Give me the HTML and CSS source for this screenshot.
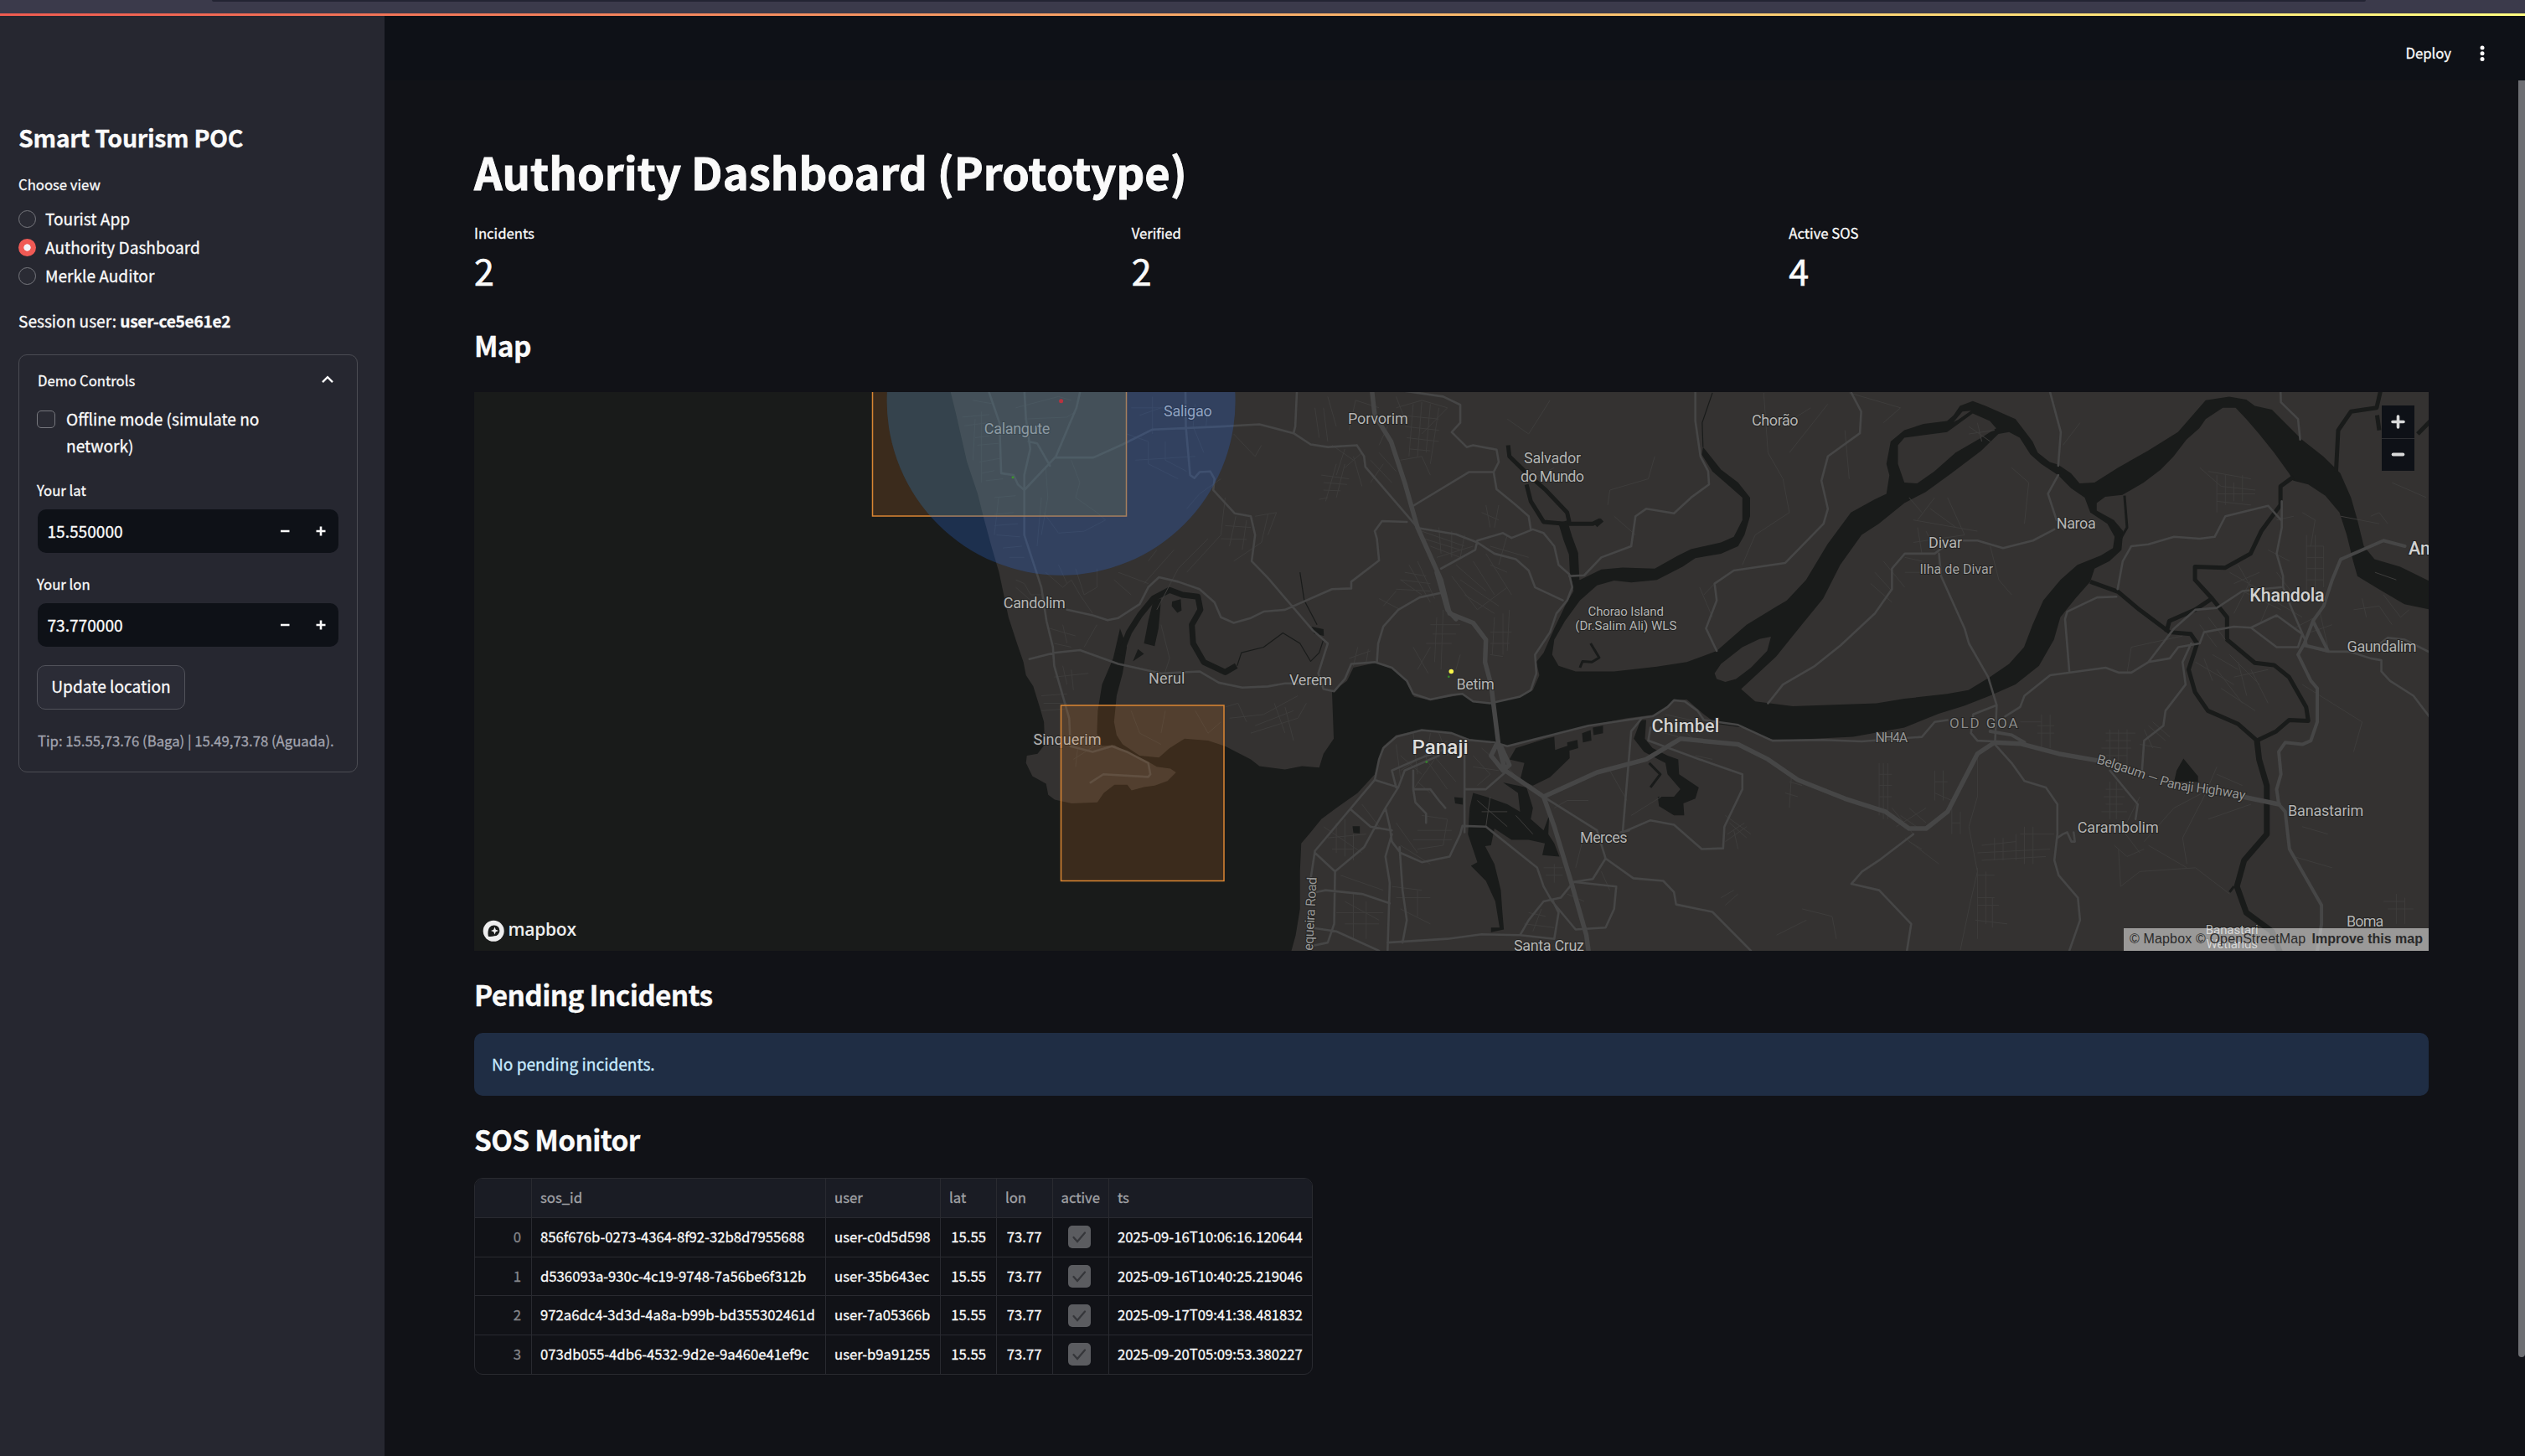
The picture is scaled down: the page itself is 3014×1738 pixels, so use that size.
FILE: index.html
```html
<!DOCTYPE html>
<html lang="en">
<head>
<meta charset="utf-8">
<title>Smart Tourism POC</title>
<link rel="stylesheet" href="styles.css">
</head>
<body>
<div class="browser-edge"><div class="address-bar"></div></div>
<div class="decoration"></div>
<div class="app">
  <aside class="sidebar">
    <h2 class="brand">Smart Tourism POC</h2>
    <div class="label choose">Choose view</div>
    <div class="radio"><span class="dot"></span><span>Tourist App</span></div>
    <div class="radio"><span class="dot dot-on"></span><span>Authority Dashboard</span></div>
    <div class="radio"><span class="dot"></span><span>Merkle Auditor</span></div>
    <p class="session">Session user: <b>user-ce5e61e2</b></p>
    <section class="expander">
      <div class="expander-head"><span class="label">Demo Controls</span>
        <svg class="chevron" width="16" height="10" viewBox="0 0 16 10"><path d="M2 8.2 8 2.2l6 6" fill="none" stroke="#fafafa" stroke-width="2.4"/></svg>
      </div>
      <div class="check"><span class="box"></span><span class="check-text">Offline mode (simulate no<br>network)</span></div>
      <div class="label field-label">Your lat</div>
      <div class="number"><span class="value">15.550000</span>
        <svg class="steps" width="54" height="12" viewBox="0 0 54 12"><path d="M0 6h10.5M42.5 6h11M48 .5v11" stroke="#fafafa" stroke-width="2.6"/></svg></div>
      <div class="label field-label second">Your lon</div>
      <div class="number"><span class="value">73.770000</span>
        <svg class="steps" width="54" height="12" viewBox="0 0 54 12"><path d="M0 6h10.5M42.5 6h11M48 .5v11" stroke="#fafafa" stroke-width="2.6"/></svg></div>
      <div class="button">Update location</div>
      <div class="label tip">Tip: 15.55,73.76 (Baga) | 15.49,73.78 (Aguada).</div>
    </section>
  </aside>
  <main class="main">
    <header class="toolbar"><span class="deploy">Deploy</span>
      <svg class="kebab" width="6" height="20" viewBox="0 0 6 20"><g fill="#fafafa"><circle cx="3" cy="3" r="2.5"/><circle cx="3" cy="9.8" r="2.5"/><circle cx="3" cy="16.6" r="2.5"/></g></svg>
    </header>
    <div class="content">
      <h1>Authority Dashboard (Prototype)</h1>
      <div class="metrics">
        <div><div class="label">Incidents</div><div class="metric">2</div></div>
        <div><div class="label">Verified</div><div class="metric">2</div></div>
        <div><div class="label">Active SOS</div><div class="metric">4</div></div>
      </div>
      <h3 class="h-map">Map</h3>
      <div class="map">
        <svg class="map-canvas" viewBox="566 468 2333 667" width="2333" height="667">
          <defs><clipPath id="in-zone"><rect x="1041.5" y="440" width="303" height="176"/></clipPath></defs>
          <rect x="566" y="468" width="2333" height="667" fill="#343231"/>
          <!-- central sheet; the western and eastern sheets sit 1529 units to each side -->
          <g transform="translate(1340 460) scale(.5102 .4464)">
            <path class="water" d="M-1540 10H-404L-389 80-364 205-339 290-326 350-307 430-289 500-267 620-247 690-232 740-226 775-209 805-194 860-184 900-182 960-199 985-224 990-226 1010-211 1045-179 1065-174 1095-159 1108-119 1118-59 1115-44 1090-19 1068 11 1068 21 1083 50 1074 75 1070 105 1058 125 1035 112 1025 80 1020 55 1003 20 985 0 975-19 962-49 964-60 930-58 870-48 800-22 730-6 650 10 700 0 770-14 830-20 900-14 935 0 960 40 990 85 995 110 970 145 945 200 950 240 965 300 1000 320 1018 380 1027 420 1018 460 1022 470 985 494 945 490 820 525 790 540 755 590 742 630 755 660 785 682 833 720 842 770 832 795 825 820 845 860 850 930 832 960 815 975 775 968 740 985 715 1010 650 1035 590 1055 550 1050 515 1070 520 1120 492 1170 487 1245 490 1300 455 1330 438 1400 420 1430 405 1450 360 1450 300 1420 270 1380 230 1355 185 1358 165 1365 175 1400 225 1440 260 1468 300 1468 350 1455 400 1440 430 1400 450 1340 462 1310 485 1250 520 1190 527 1150 522 1110 535 1070 575 1035 630 1010 680 1005 720 1020 750 1060 765 1150 765 1250 752 1320 740 1390 710 1460 640 1529 592 1554 575 1599 520 1649 425 1704 340 1759 305 1787 290 1794 240 1787 210 1797 150 1829 120 1874 103 1929 95 1944 80 1959 55 1989 42 2019 55 2089 90 2129 150 2141 180 2169 205 2189 212 2219 235 2239 262 2274 260 2329 220 2399 175 2469 125 2534 40 2589 30 2629 38 2649 55 2689 65 2759 145 2809 190 2829 212 2849 235 2874 300 2889 360 2904 430 2929 465 2989 485 3060 525V600L2999 585 2939 545 2889 510 2879 470 2864 400 2847 340 2814 295 2774 265 2739 255 2729 235 2694 180 2659 130 2629 90 2604 60 2574 60 2534 90 2519 115 2489 145 2459 190 2429 225 2389 260 2339 293 2299 298 2279 315 2279 335 2319 360 2341 390 2337 440 2309 470 2274 490 2264 525 2229 570 2194 620 2179 680 2144 750 2089 800 2029 830 1969 857 1909 878 1829 915 1709 940 1529 950 1500 940 1450 915 1390 905 1360 880 1320 840 1290 842 1250 880 1180 890 1090 910 1000 935 900 965 810 945 770 930 700 920 640 935 610 965 600 1000 590 1040 550 1090 500 1130 465 1160 440 1195 418 1225 415 1300 415 1400 405 1470 393 1520H-1540Z"/>
            <path class="land" d="M1447 812 1480 845 1568 858 1764 850 1829 838 1929 825 1979 815 2029 780 2074 745 2109 700 2129 640 2154 575 2194 520 2234 480 2289 455 2317 435 2321 405 2304 370 2264 340 2251 300 2219 275 2189 240 2149 210 2124 185 2099 140 2074 125 2049 130 2009 175 1939 235 1879 285 1829 315 1769 370 1729 400 1679 480 1639 570 1589 640 1529 725Z"/>
            <path class="land" d="M1385 770 1400 745 1450 700 1490 678 1517 672 1508 710 1470 755 1435 785 1410 793 1390 785ZM1814 160 1829 140 1929 125 1989 75 2029 95 2044 115 2009 140 1949 180 1899 230 1859 262 1829 260 1814 210ZM1944 98 1965 70 1985 68 1955 92Z"/>
            <path class="water" d="M72 575 90 570 88 600 84 650 75 697 50 690 60 630ZM116 578 136 572 138 602 128 608 115 590ZM24 738 36 705 50 718ZM442 645 470 652 471 670 448 664ZM920 970 990 945 1010 940 1012 975 1045 962 1046 997 1000 1048 960 1070 930 1055 940 1010 905 1000ZM1040 955 1064 948 1066 970 1042 978ZM1075 930 1095 922 1097 950 1077 955ZM1100 915 1124 910 1124 930 1102 935ZM820 1090 850 1100 900 1120 930 1140 925 1090 890 1062 945 1075 960 1130 955 1160 985 1190 998 1150 996 1200 1010 1225 1022 1260 982 1256 988 1225 950 1215 910 1215 870 1185 862 1230 848 1232 870 1280 885 1350 888 1400 892 1455 862 1462 862 1450 882 1450 872 1380 850 1325 815 1285 830 1275 808 1200 812 1130ZM776 1101 796 1103 796 1121 778 1118ZM538 1179 555 1179 555 1198 540 1197ZM1196 945 1212 895 1225 895 1222 945 1240 970 1275 990 1300 1000 1302 1040 1348 1075 1340 1105 1312 1118 1314 1150 1290 1150 1255 1125 1252 1100 1290 1100 1305 1080 1275 1040 1270 1010 1220 980ZM2482 998 2516 1045 2516 1060 2460 1060 2466 1030Z"/>
            <g class="river">
              <path class="r8" d="M-6 720 15 660 40 615 72 570 110 547 140 560 176 565 182 600 162 640 165 690 190 740 240 767 266 750"/>
              <path class="r6" d="M902 160 905 190 950 240 990 280 1040 340 1045 365M945 265 955 310 985 365 1035 370 1100 370 1118 360M1107 375 1122 360"/>
              <path class="r10" d="M1030 365 1042 410 1055 450 1058 520"/>
              <path class="r2" d="M268 750 278 715 330 700 375 662 415 690 440 738 460 715 470 680M415 500 425 575 455 640M1358 165 1356 100 1380 20"/>
              <path class="r4" d="M1070 755 1076 738 1098 740 1115 728 1095 690M1232 1010 1258 1040 1235 1075M2344 295 2350 380 2335 410M2590 1355 2600 1340"/>
              <path class="r6" d="M2264 525 2329 552 2379 600 2449 660 2499 665 2514 690 2494 760 2509 820 2539 870 2609 905 2654 950 2699 925 2729 895 2774 897 2769 860 2729 780 2694 748 2649 742 2584 680 2584 620 2549 570 2509 520 2509 485 2579 488 2639 450 2664 390 2709 320 2709 270 2739 245M2549 570 2509 600 2449 630 2442 660M2839 230 2844 120 2874 70 2934 60 2944 10M2935 80 2940 120M3030 130 3060 95"/>
              <path class="r8" d="M2654 950 2659 1000 2677 1070 2677 1200 2624 1270 2607 1340 2629 1410 2689 1460 2709 1520"/>
            </g>
            <g class="minor">
              <path d="M-375 85-312 78M-370 108-315 100M-345 140-312 135M-340 160-290 155M-335 205-285 195M-330 235-300 228M-320 255-280 250M-300 300-250 295M-300 345-255 340M-300 375-245 370M-295 400-240 405M-280 435-235 430M-265 460-230 460M-350 40-300 50M-250 60-150 30-120 40M-230 90-130 85-110 70M-330 70-330 260M-345 90-350 200M-290 300-300 400M-180 215-175 300-190 400M-200 430-190 300M-120 200-100 260-110 300-60 340-40 360-90 390-150 395-185 340M-250 520-230 530-215 560-190 560M-250 540-210 580M-180 500-140 540-120 520-100 560M-150 480-130 530M-110 490-90 560-60 540-60 490M-20 520 20 560M-10 500 60 530M-170 650-110 670M-160 690-120 700M-140 640-130 690M-60 640-90 700M-160 780-80 770M-140 750-130 800M-120 760-115 815M-190 830-130 825M-185 850-130 850M-190 870-130 865M-100 560-70 610M-105 970-110 1020M-60 960-115 1000"/>
              <path d="M10 130 60 150 60 210 130 250M40 80 90 60M20 60H130M70 30V130M170 50 165 110 190 180M200 60 195 110M30 200 170 190M100 150V200L150 230M260 130 310 190 325 160M230 250 180 290 150 330M340 345 325 420 260 470M310 350 360 340 340 400M240 300 230 400 150 500M265 350 250 430M290 360 280 440M240 375 300 380M230 410 290 412M80 440 60 470M120 440 50 530M200 410 130 490 80 600"/>
              <path d="M465 240 530 250M470 260 525 265M470 280 510 282M460 305 480 300M500 210 475 310M520 210 500 300M540 190 560 270M490 160 540 200M520 170 500 240M560 180 520 220M580 200 630 260M600 180 640 230M610 210 580 260M500 110 480 30M530 120 545 40 600 60M620 110 600 160M640 60 700 40 760 60M650 80 740 90M660 110 740 120M665 140 740 150M670 170 720 175M680 50 670 190M700 45 690 190M720 50 710 180M740 60 720 210M640 30 660 90M760 60 700 130M650 200 700 190 720 240M450 60 460 140M480 150 470 60"/>
              <path d="M700 390 800 430M705 410 790 440M720 430 790 460M735 460 820 430M740 380 745 450M770 390 770 460M800 400 790 460M690 470 730 570M670 480 720 580M650 520 700 560M640 550 610 590M600 570 650 600M660 500 710 510M650 520 720 530M640 545 720 550M780 480 850 550M790 520 880 590M820 470 870 560M850 450 910 560M770 510 830 600M800 560 870 610M830 600 900 540M860 480 900 500M840 340 880 360M850 320 860 380M880 320 870 380M860 430 950 460M900 400 880 480M750 600 745 760M735 620 730 740M720 640 790 640M725 665 780 665M710 690 770 690M680 700 715 770M690 760 720 700M870 620 865 720M890 610 890 720M905 600 900 710M860 660 910 660M860 690 905 690M860 720 890 725M530 730 580 710M540 750 550 700M570 740 575 705M780 760 790 720"/>
              <path d="M240 860 270 850 290 900M250 890 330 880 410 830M300 930 410 890 430 850M310 910 400 870M355 850 380 930M380 860 400 950M20 870 40 930 90 960M90 800 110 730 90 640M100 870 90 930M170 870 200 930 230 900"/>
              <path d="M640 960 650 1050M680 930 690 1040M720 930 710 1000M740 930 760 990M650 1030 760 950M650 990 700 1040M710 1000 760 1080M720 980 780 1060M690 1060 720 1090M730 1000 680 1080M820 990 860 1040 830 1070M840 970 880 1010M820 1020 880 1030M700 1150 760 1160 750 1230 690 1240M690 1190 770 1190M680 1215 770 1215M640 1170 690 1250M650 1230 720 1280M470 1180 560 1250M480 1210 570 1200M490 1240H540M500 1170V1250M520 1160V1260M540 1200V1270M560 1120 600 1180M510 1310 610 1350M520 1380 600 1430M520 1440 600 1440M540 1360V1480M570 1380V1480M500 1410 610 1410M630 1340 700 1350M640 1370 720 1370M650 1400 720 1440M690 1350V1420M900 1020 940 1070M830 1110 900 1180M840 1140 900 1140M860 1100 850 1180M920 1150 960 1200M940 1440 1010 1450M950 1410 990 1420M960 1460 980 1400M985 1290 1030 1290M990 1310 1030 1310M1010 1280V1330M1040 1360 1080 1380M1080 1200 1060 1290M1120 1300 1140 1350"/>
              <path d="M1010 1130 1040 1110 1090 1110M1140 1030 1180 1110M1190 1150 1260 1100M1410 1150 1470 1200M1420 1170 1460 1210M1430 1190 1440 1240M1415 1200 1455 1170M1410 1220 1460 1180M1340 990 1380 1000M1290 900 1340 950M1240 920 1300 940M1270 880 1350 900M1400 1370 1430 1350M1410 1390 1440 1360M1135 320 1140 280 1230 250 1245 190M960 250 1010 220M1500 20 1510 180 1545 250 1560 340 1480 400 1450 480M1350 540 1380 620M1360 560 1385 530M900 90 950 130 1000 40M1200 400 1150 350"/>
              <path d="M1760 500 1800 550M1750 530 1800 580M1780 470 1830 540M1830 460 1870 470M1830 500 1870 500M1860 380 1870 450M1850 420 1970 400M1880 390 1900 440M1850 360 2000 390M1900 300 1860 360M1930 300 1970 400M1890 330 1950 380M1840 300 1870 340M2080 220 2120 260 2110 370M2030 430 2050 520 2080 560M1980 130 2040 120M2000 100 2010 150M1980 110 2030 150M2200 160 2240 100M1700 20 1820 60 1780 100M1650 50 1560 180M1690 120 1700 250M1610 60 1540 110"/>
              <path d="M2520 220 2570 270 2650 280M2560 240V340M2580 240V320M2600 260V310M2620 240V310M2560 290H2650M2560 310 2640 320M2540 230 2640 250M2590 500 2680 560M2600 530 2660 500M2610 480 2650 560M2620 550 2710 600M2640 520 2600 610M2680 440 2730 470M2700 500 2740 560M2770 400V560M2790 400V560M2810 430V540M2770 430H2810M2770 460H2810M2770 490H2810M2770 520H2810M2760 340 2790 360 2780 430M2700 360 2740 350M2690 560 2660 640M2700 580 2760 620M2740 650 2790 620M2800 600 2820 700M2780 660 2830 640"/>
              <path d="M2520 640 2560 700M2540 620 2580 680M2510 740 2600 800M2530 730 2550 790M2560 760 2620 850M2590 720 2660 800M2610 740 2630 830M2640 760 2680 850M2550 720 2610 760M2600 780 2680 760M2570 810 2650 870M2350 770 2360 700 2480 670M2760 800 2900 900 2880 980M2880 600 2940 590 2970 640M2910 620 2900 570M2950 560 2990 620 3010 600M2930 500 2980 520M2850 350 2940 370M2970 260 3050 300M2920 350 2940 340 2960 370"/>
              <path d="M2300 930H2370M2300 950H2360M2290 970H2360M2300 990H2350M2310 920V1020M2330 920V1020M2350 920V1020M2390 920 2410 970M2400 910 2440 950M2410 900 2450 940M2380 960 2430 970M2150 880V980M2170 880V970M2140 910H2180M2140 930H2180M2150 900 2100 900M1770 1010V1150M1780 1010V1160M1790 1010V1160M1770 1040H1800M1770 1070H1800M1770 1100H1800M1800 1130 1850 1200M1810 1180 1880 1130M1820 1150 1870 1190M1840 1130 1880 1170M1900 1030V1110M1920 1030V1110M1900 1060H1930M1900 1090 1940 1110M1940 1130V1200M1960 1140V1200M1940 1170H1960M1840 1220 1870 1240M1830 1210 1910 1280M1560 1060 1590 1070M1550 1090 1580 1100M1565 1040 1560 1130"/>
              <path d="M2300 1080H2340M2295 1100H2345M2300 1120H2340M2310 1060V1160M2325 1060V1160M2290 1140H2350M2380 1100 2340 1190 2380 1250M2320 1230 2350 1260 2390 1240M2010 1230 2090 1220M2000 1250 2170 1240M2010 1270 2160 1260M2040 1210V1270M2060 1210V1270M2090 1200V1270M2110 1180V1280M2130 1180V1280M2100 1200H2180M2000 1290V1480M2020 1300V1440M2000 1310 2040 1310M2000 1370H2040M2000 1390H2050M1995 1430 2070 1440M2035 1370V1450M2000 980V1100L1980 1180 2000 1300 1980 1400 1960 1510M2330 1240 2335 1340 2380 1300 2510 1290 2590 1360M2400 1230 2490 1290M2560 1020 2530 1100 2480 1210 2490 1280M2390 1220 2460 1130 2560 1070M2560 1040 2620 1070M2540 1160 2640 1120M1590 1400 1660 1420 1670 1480M1600 1430 1530 1470M2740 1260 2830 1290M2760 1180 2820 1200M2950 1380H3000M2960 1400H3020M2980 1360V1440M3000 1370V1440"/>
            </g>
            <g class="road">
              <path d="M-315 10-288 100-284 235-255 240-245 265-230 280M-230 10-226 90-216 170-230 240-230 400-190 540-178 630-163 700-160 750-125 890-122 965-70 980-25 965 10 980 60 1010 65 1040 60 1047-45 1040-75 1062M-98 10-108 60-156 190-172 210-230 280M-220 150-200 155-170 215M-156 193-68 193 0 158 70 118 230 110 320 104 400 128 440 158 480 165 548 160 565 190 568 218 690 380M-218 732-160 715-100 708-10 745 90 770 180 765 225 795 280 808 340 805 380 797 465 797M-130 600-70 615-35 628-10 622 40 585 60 540 85 513 130 525 180 545 215 580 230 620 260 635 300 622 330 605 380 600 490 545 535 543 535 525 600 468 595 410 590 390 607 363 665 365M147 10 148 110 158 240 168 248 180 232 205 230 215 250 212 280 262 342 300 350 310 400 302 470 340 515 445 655 480 690 458 770 470 812 495 818 520 785 535 745 590 740 630 755 665 790 680 825 720 840 770 828 795 825 820 845 860 850 930 832 955 815 968 770 965 720 1000 660 1015 610 1040 575 1052 540 1045 505 1020 480 1010 430 985 395 960 385 910 408 890 395 830 415 825 440 745 490M408 10 404 110 400 128M660 15 750 30 790 52 790 100 770 125 805 165 820 160 875 172 880 205 868 232 810 232 680 322M868 232 875 278 920 320 950 350 955 385M694 382 780 398 830 420 870 450 920 465 950 495 965 540 1030 575M745 555 695 567 645 600 610 645 598 690 595 740M1340 10 1340 95 1352 190 1370 230 1372 265 1330 300 1290 342 1225 330 1200 350 1190 430 1120 460 1080 508 1045 510"/>
              <path d="M600 1000 610 970 640 940 700 922 770 930 810 948 870 955 900 965 1090 910 1240 885 1275 860 1290 842 1315 845 1345 870 1360 895 1440 908 1520 950 1640 948 1729 952 1870 940 1900 900 1930 895M600 1000 590 1055 450 1245 440 1320M640 1075 630 1030 690 1000 760 970M590 1055 645 1075 660 1030 740 990M645 1075 615 1130 565 1235 497 1300 450 1250M535 1135 580 1180 630 1190M615 1130 625 1180 630 1220 650 1250 700 1275 765 1260 790 1200 795 1178 850 1180 970 1290 985 1340 1005 1380 1060 1455 1130 1450 1150 1400 1155 1340 1055 1328M497 1300 495 1440 480 1490 440 1500M440 1358 475 1350 560 1360 625 1385M630 1200 615 1260 625 1330 620 1512M648 1235 655 1350 665 1430 655 1490M440 1450 500 1460 600 1512M620 1490 760 1480 840 1468 930 1470 1010 1480 1020 1410 1005 1375M930 1470 950 1430 985 1380 1025 1370 1055 1328M680 1030 680 1080 720 1080 740 1110 755 1130M680 1080 685 1115 710 1145 710 1170M800 970 800 1195M803 1080 850 1080 895 1035M985 1100 1110 1190 1130 1265 1100 1320 1055 1328M1130 1265 1195 1318 1265 1325 1290 1355 1295 1388 1380 1408 1470 1512M1215 890 1190 925 1170 1195 1235 1163 1290 1175 1355 1240 1405 1238 1408 1180 1450 1080 1450 1040 1350 1000 1230 950 1235 915M1165 1195 1185 1190M1510 850 1545 800 1620 750 1680 695 1760 610 1800 545 1800 490 1830 450 1900 450 1940 415 2000 415 2060 435 2130 415 2180 385M1910 450 1915 510 1970 650 1980 690 2025 780 2045 855 2041 960M1390 710 1365 650 1390 575 1385 530 1430 495 1550 475 1640 370 1650 330 1635 255 1650 190 1725 128 1728 70 1705 20M2168 10 2195 125 2189 215M2189 240 2165 290 2185 360M2045 855 1990 880 1985 930 2000 950 2040 952M2041 960 2080 1010 2110 1058 2160 1075 2187 1120 2187 1200 2180 1270 2190 1310 2235 1370 2240 1430 2215 1512M2187 1210 2200 1200 2210 1195 2220 1220 2228 1220 2225 1195M1850 1200 1770 1270 1730 1300 1705 1333 1770 1350 1845 1440 1835 1512M2065 885 2100 860 2110 830 2170 775 2300 755 2330 768 2360 768 2400 740 2450 730 2470 700 2520 690 2530 660 2600 645 2640 648 2700 615 2760 665M2400 740 2460 650 2510 600 2560 595 2620 550 2710 540M2215 765 2205 625 2210 605 2280 567 2325 565M2328 545 2340 470 2360 430 2400 425 2460 405 2520 410 2555 405 2580 350 2680 322 2710 360M2712 310 2712 380 2700 450 2715 510 2715 540 2740 610 2770 690M2640 648 2700 700 2750 700 2760 665M2500 690 2480 740 2487 800 2440 870 2435 910 2390 950 2385 1030M2310 1030 2375 1120 2370 1160M2709 10 2710 45 2750 90 2755 145M2765 695 2820 712 2870 712 2920 730 2945 735 2945 765 2965 790 3020 830 3060 890M2930 700 2960 675 3000 680 3060 715"/>
              <path class="mid" d="M3000 430 2950 415 2850 465 2830 520 2810 590 2785 630 2765 690 2750 720 2780 790 2795 810 2795 900 2780 950 2760 960 2720 955 2705 980 2710 1040 2700 1080 2705 1120 2720 1140 2730 1240 2805 1390 2805 1440 2795 1512M2785 630 2820 710 2765 695M2030 925 2080 935 2110 955"/>
              <path class="main-road" d="M583 10 590 80 628 150 660 260 690 380 745 520 765 610 820 635 850 680 848 740 862 800 880 965 895 1030 985 1100 1010 1180 1050 1330 1085 1470 1090 1512M735 500 760 600 780 625M875 960 862 990 890 1030M885 965 905 1015 890 1030M985 1100 1110 1035 1225 1000 1305 945 1440 960 1510 1000 1580 1055 1690 1105 1785 1140 1840 1185 1880 1185 1930 1140 2000 985 2040 955 2100 958 2190 985 2290 1005M2620 1100 2705 1120"/>
            </g>
          </g>
          <g class="place">
            <text x="1174.8" y="517.6" textLength="78.6">Calangute</text>
            <text x="1197.8" y="726" textLength="74">Candolim</text>
            <text x="1233.5" y="889" textLength="81">Sinquerim</text>
            <text x="1389" y="497" textLength="57.7">Saligao</text>
            <text x="1608.9" y="506.4" textLength="72">Porvorim</text>
            <text x="1819" y="552.9" textLength="68">Salvador</text>
            <text x="1815" y="574.7" textLength="76">do Mundo</text>
            <text x="2091" y="508" textLength="55.6">Chorão</text>
            <text class="park" x="1895.6" y="735" textLength="90.3">Chorao Island</text>
            <text class="park" x="1880.3" y="752" textLength="121">(Dr.Salim Ali) WLS</text>
            <text x="1371" y="815.8" textLength="43.4">Nerul</text>
            <text x="1539" y="818" textLength="51">Verem</text>
            <text x="1738.5" y="823" textLength="45.4">Betim</text>
            <text class="city" x="1685.4" y="899.7" textLength="67.3">Panaji</text>
            <text class="town" x="1971.6" y="873.8" textLength="80.6">Chimbel</text>
            <text x="1886" y="1006" textLength="56.6">Merces</text>
            <text x="1807" y="1134.5" textLength="84">Santa Cruz</text>
            <text class="street" transform="translate(1567 1135) rotate(-87)" textLength="88">equeira Road</text>
            <text x="2454.7" y="630.5" textLength="47">Naroa</text>
            <text x="2302" y="653.8" textLength="40">Divar</text>
            <text class="island" x="2291.4" y="685" textLength="87.8">Ilha de Divar</text>
            <text class="town" x="2685.3" y="718" textLength="89.3">Khandola</text>
            <text class="town" x="2875" y="661.8">An</text>
            <text x="2801.6" y="777.9" textLength="83">Gaundalim</text>
            <text x="2731" y="974.3" textLength="90.3">Banastarim</text>
            <text x="2479.7" y="994" textLength="97">Carambolim</text>
            <text x="2801" y="1106.4" textLength="44.4">Boma</text>
            <text class="district" x="2327" y="869.4" textLength="81.6">OLD GOA</text>
            <text class="street" x="2238.4" y="886" textLength="38.8">NH4A</text>
            <path id="highway" d="M2502 911C2530 919 2555 929 2582 938S2650 946 2690 958" fill="none"/>
            <text class="street"><textPath href="#highway" textLength="183">Belgaum — Panaji Highway</textPath></text>
            <text class="park" x="2632.8" y="1115" textLength="62.8">Banastari</text>
            <text class="park" x="2633.5" y="1132" textLength="61.5">Wetlands</text>
          </g>
          <rect class="zone" x="1041.5" y="440" width="303" height="176"/>
          <rect class="zone" x="1266.5" y="842" width="194.5" height="209.5"/>
          <circle cx="1266.6" cy="478.7" r="208" fill="rgba(45,110,235,.25)"/>
          <circle cx="1266.6" cy="478.7" r="208" fill="rgba(40,120,60,.12)" clip-path="url(#in-zone)"/>
          <circle cx="1266.6" cy="478.8" r="2.5" fill="#b8333f"/>
          <circle cx="1209" cy="569.8" r="1.5" fill="#3d9130"/>
          <circle cx="1729.3" cy="807.8" r="1.4" fill="#35862a"/>
          <circle cx="1702.8" cy="909.6" r="1.4" fill="#35862a"/>
          <circle cx="1732.3" cy="801.5" r="2.8" fill="#f7f34a"/>
          <circle cx="589.2" cy="1111.3" r="12.5" fill="#eee"/>
          <path d="M582.8 1117.8C581.5 1109 584.5 1104.500 590 1104.500a6.400 6.400 0 0 1 0 12.800c-2 .7-4.500 1-7.200.5z" fill="#191b1a"/>
          <path d="M590.500 1106.500 591.800 1109.700 595 1111 591.800 1112.300 590.500 1115.500 589.200 1112.300 586 1111 589.200 1109.700Z" fill="#eee"/>
          <text class="logo" x="606.500" y="1117.300" textLength="81.500">mapbox</text>
        </svg>
        <div class="zoom">
          <svg width="39" height="39" viewBox="0 0 39 39"><path d="M19.500 13v13M13 19.500h13" stroke="#d9dada" stroke-width="3.6" stroke-linecap="round"/></svg>
          <svg width="39" height="38" viewBox="0 0 39 38"><path d="M13.500 19h12" stroke="#d9dada" stroke-width="4" stroke-linecap="round"/></svg>
        </div>
        <div class="credits"><span class="credit-a">© Mapbox © OpenStreetMap</span><b class="credit-b">Improve this map</b></div>
      </div>
      <h3 class="h-pending">Pending Incidents</h3>
      <div class="info">No pending incidents.</div>
      <h3 class="h-sos">SOS Monitor</h3>
      <div class="frame">
        <table>
          <colgroup><col class="c0"><col class="c1"><col class="c2"><col class="c3"><col class="c4"><col class="c5"><col class="c6"></colgroup>
          <thead><tr><th></th><th>sos_id</th><th>user</th><th>lat</th><th>lon</th><th>active</th><th>ts</th></tr></thead>
          <tbody>
            <tr><td class="idx">0</td><td>856f676b-0273-4364-8f92-32b8d7955688</td><td>user-c0d5d598</td><td class="num">15.55</td><td class="num">73.77</td><td class="tick"><svg width="27" height="27" viewBox="0 0 27 27"><rect width="27" height="27" rx="5" fill="#5b5c60"/><path d="M6.500 14 11 19 20 8.500" fill="none" stroke="#35363a" stroke-width="2.200" stroke-linecap="round"/></svg></td><td>2025-09-16T10:06:16.120644</td></tr>
            <tr><td class="idx">1</td><td>d536093a-930c-4c19-9748-7a56be6f312b</td><td>user-35b643ec</td><td class="num">15.55</td><td class="num">73.77</td><td class="tick"><svg width="27" height="27" viewBox="0 0 27 27"><rect width="27" height="27" rx="5" fill="#5b5c60"/><path d="M6.500 14 11 19 20 8.500" fill="none" stroke="#35363a" stroke-width="2.200" stroke-linecap="round"/></svg></td><td>2025-09-16T10:40:25.219046</td></tr>
            <tr><td class="idx">2</td><td>972a6dc4-3d3d-4a8a-b99b-bd355302461d</td><td>user-7a05366b</td><td class="num">15.55</td><td class="num">73.77</td><td class="tick"><svg width="27" height="27" viewBox="0 0 27 27"><rect width="27" height="27" rx="5" fill="#5b5c60"/><path d="M6.500 14 11 19 20 8.500" fill="none" stroke="#35363a" stroke-width="2.200" stroke-linecap="round"/></svg></td><td>2025-09-17T09:41:38.481832</td></tr>
            <tr><td class="idx">3</td><td>073db055-4db6-4532-9d2e-9a460e41ef9c</td><td>user-b9a91255</td><td class="num">15.55</td><td class="num">73.77</td><td class="tick"><svg width="27" height="27" viewBox="0 0 27 27"><rect width="27" height="27" rx="5" fill="#5b5c60"/><path d="M6.500 14 11 19 20 8.500" fill="none" stroke="#35363a" stroke-width="2.200" stroke-linecap="round"/></svg></td><td>2025-09-20T05:09:53.380227</td></tr>
          </tbody>
        </table>
      </div>
    </div>
    <div class="scrollbar"></div>
  </main>
</div>
</body>
</html>
```
FILE: styles.css
```css
* { box-sizing: border-box; }
body {
  margin: 0; width: 3014px; height: 1738px; overflow: hidden;
  display: flex; flex-direction: column;
  background: #111217; color: #fafafa;
  font: 400 19.1px/32px "Noto Sans CJK SC", "Noto Sans", sans-serif;
  -webkit-text-stroke: .3px;
}
h1, h2, h3, p { margin: 0; }
svg { display: block; }

.browser-edge { height: 16px; flex: none; background: #3b3a4b; padding: 0 190px 0 253px; }
.address-bar { height: 2px; background: #232433; border-radius: 0 0 8px 8px; }
.decoration { height: 3px; flex: none; background: linear-gradient(90deg, #ef5b50, #fffd80); }
.app { flex: 1; display: flex; }

.label { font-size: 16.7px; line-height: 28px; }

.sidebar { width: 459px; flex: none; background: #262730; padding: 125px 32px 0 22px; }
.brand { font-size: 28.6px; line-height: 40px; font-weight: 700; letter-spacing: -.35px; }
.choose { margin: 22px 0 10px; }
.radio { display: flex; align-items: center; gap: 11px; height: 34px; line-height: 34px; }
.dot { width: 21px; height: 21px; border: 1px solid #77787e; border-radius: 50%; background: #2a2b34; }
.dot-on { border: 0; background: radial-gradient(circle, #f3f3f8 3.8px, #f05a55 4.5px); }
.session { margin-top: 21px; }
.session b { letter-spacing: -.25px; }
.expander { margin-top: 24px; border: 1px solid #4b4c53; border-radius: 10px; height: 499px; padding: 16px 22px 0 22px; }
.expander-head { display: flex; justify-content: space-between; align-items: center; padding-right: 5px; }
.chevron { margin-top: -2px; }
.check { display: flex; gap: 13px; margin-top: 16px; }
.box { width: 22px; height: 21px; margin-top: 6px; margin-left: -1px; border: 1px solid #77787e; border-radius: 5px; background: #2a2b34; }
.field-label { margin: 23px 0 9px -1px; }
.second { margin-top: 23px; }
.number { height: 52px; background: #0e1117; border-radius: 10px; display: flex; justify-content: space-between; align-items: center; padding: 0 15.5px 0 11.5px; }
.button { margin: 22px 0 0 -1px; width: 177px; height: 53px; border: 1px solid #51525a; border-radius: 10px; background: #2b2c36; text-align: center; line-height: 49px; }
.tip { margin-top: 23px; color: #a2a4af; white-space: nowrap; }

.main { flex: 1; position: relative; }
.toolbar { height: 77px; background: #0e1117; display: flex; justify-content: flex-end; align-items: center; gap: 34px; padding: 10px 48px 0 0; }
.deploy { font-size: 16.7px; line-height: 28px; }
.kebab { margin-top: 3px; }
.content { padding: 73px 115px 0 107px; }
h1 { font-size: 52.5px; line-height: 70px; font-weight: 700; letter-spacing: .06px; -webkit-text-stroke: .9px; }
h3 { font-size: 33.4px; line-height: 44px; font-weight: 700; letter-spacing: -.65px; }
.metrics { display: grid; grid-template-columns: repeat(3, 1fr); column-gap: 21px; margin-top: 25px; }
.metric { font-size: 43px; line-height: 60px; -webkit-text-stroke: .6px; }
.h-map { margin: 38px 0 34px; }
.h-pending { margin: 30px 0 24px; }
.h-sos { margin: 30px 0 24px; }
.info { height: 75px; border-radius: 10px; background: #1f2d44; color: #c7ebff; padding: 21px; }

.map { position: relative; width: 2333px; height: 667px; overflow: hidden; }
.water { fill: #191b1a; }
.land { fill: #343231; }
.river path { fill: none; stroke: #191b1a; vector-effect: non-scaling-stroke; stroke-linejoin: round; }
.river .r2 { stroke-width: 1.2px; }
.river .r4 { stroke-width: 3px; }
.river .r6 { stroke-width: 5px; }
.river .r8 { stroke-width: 7px; }
.river .r10 { stroke-width: 11px; }
.minor path { fill: none; stroke: #3e3d3c; stroke-width: 1px; vector-effect: non-scaling-stroke; }
.road path { fill: none; stroke: #464646; stroke-width: 2.6px; vector-effect: non-scaling-stroke; stroke-linejoin: round; stroke-linecap: round; }
.road .mid { stroke-width: 4px; }
.road .main-road { stroke-width: 5.5px; }
.place text { font: 400 18px Roboto, sans-serif; fill: #b4b4b3; stroke: #242423; stroke-width: 2px; paint-order: stroke; -webkit-text-stroke: 2px #242423; }
.place .park { font-size: 15px; }
.place .island { font-size: 16px; fill: #a3a3a2; }
.place .city { font-size: 24px; font-weight: 500; fill: #dededd; }
.place .town { font-size: 21.5px; font-weight: 500; fill: #d2d2d1; }
.place .district { font-size: 17px; fill: #8b8b8a; }
.place .street { font-size: 16px; fill: #969695; }
.zone { fill: rgba(255, 140, 40, .15); stroke: #db8633; stroke-width: 1.5px; }
.logo { font: 600 21px "Open Sans", sans-serif; fill: #eee; }
.zoom { position: absolute; left: 2277px; top: 16px; width: 39px; height: 78px; background: #0e1117; }
.zoom svg + svg { border-top: 1px solid #2d2e32; }
.credits { position: absolute; right: 0; bottom: 0; width: 364px; height: 27px; padding: 0 7px; display: flex; justify-content: space-between; background: rgba(255, 255, 255, .5); color: #2a2a2a; font: 16px/26px "Liberation Sans", sans-serif; white-space: nowrap; -webkit-text-stroke: 0; }
.credit-a { letter-spacing: .15px; }

.frame { width: 1001px; height: 235px; border: 1px solid #292a30; border-radius: 10px; overflow: hidden; }
table { table-layout: fixed; width: 1000px; border-collapse: separate; border-spacing: 0; font-size: 16.7px; line-height: 24px; }
.c0 { width: 68px; } .c1 { width: 351px; } .c2 { width: 137px; } .c3 { width: 67px; } .c4 { width: 66.5px; } .c5 { width: 67.5px; } .c6 { width: 243px; }
th, td { padding: 0 10px 2px; border-right: 1px solid #292a30; border-bottom: 1px solid #292a30; text-align: left; white-space: nowrap; }
th { height: 47px; background: #1a1c24; color: #a1a2a6; font-weight: 400; }
td { height: 46.7px; }
.idx { text-align: right; color: #85868b; padding-right: 12px; }
.num { text-align: right; padding-right: 12px; }
.tick { padding: 0 0 0 18.5px; }
.scrollbar { position: absolute; right: 0; top: 77px; width: 8px; height: 1524px; background: #6d6e72; border-radius: 0 0 4px 4px; }
```
